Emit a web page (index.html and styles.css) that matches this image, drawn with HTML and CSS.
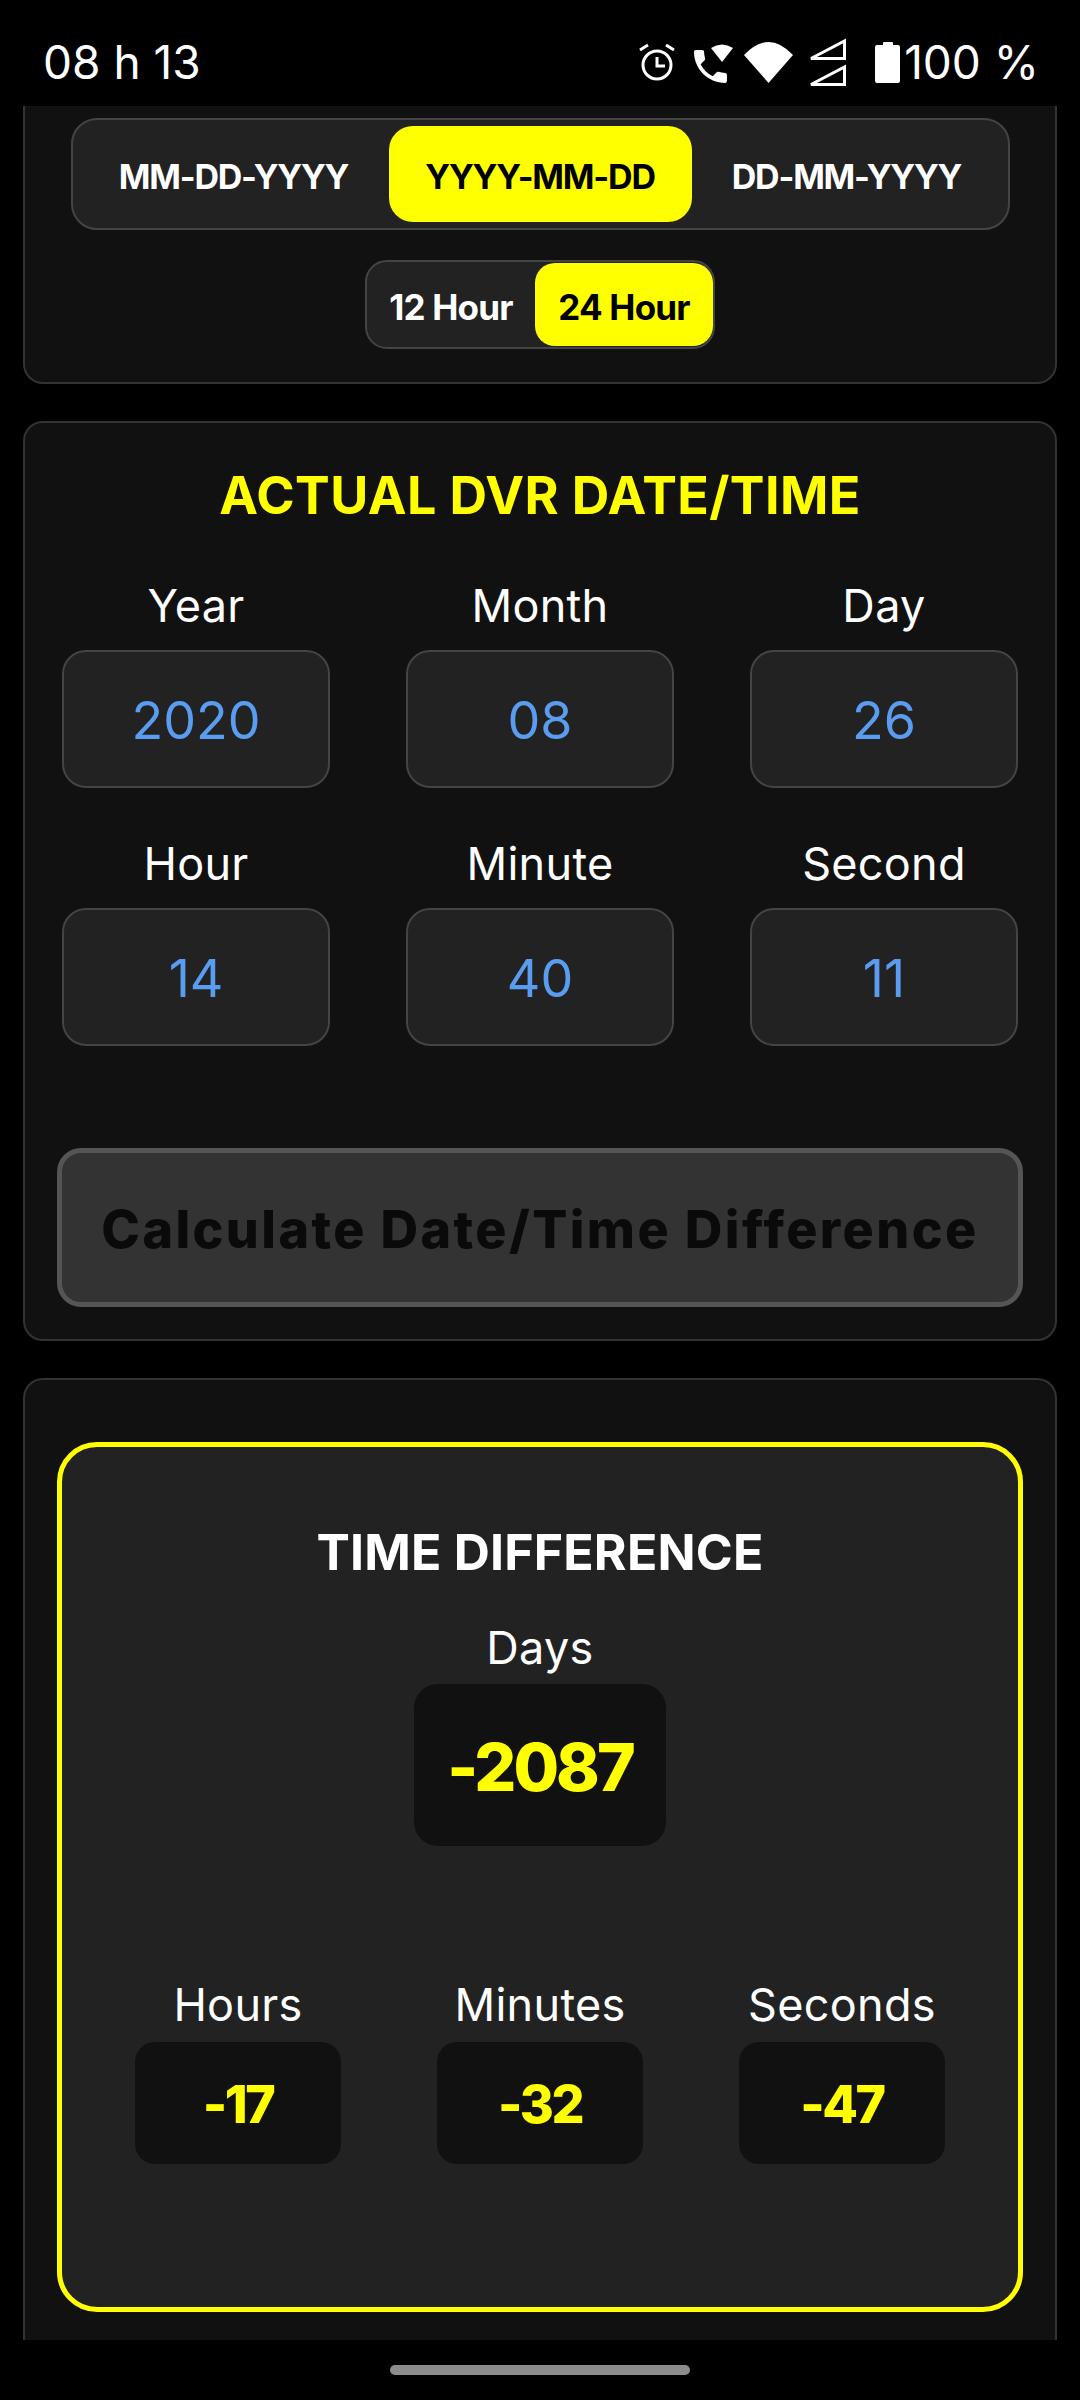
FILE: index.html
```html
<!DOCTYPE html>
<html lang="en">
<head>
  <meta charset="UTF-8">
  <title>DVR Time Calculator</title>
  <meta name="viewport" content="width=device-width, initial-scale=1.0">
  <link rel="stylesheet" href="styles.css">
</head>
<body>

<div class="phone">
  <div class="status-bar">
    <span class="clock">08 h 13</span>
    <div class="status-right">
      <svg class="status-icons" width="262" height="50" viewBox="0 0 262 50" fill="#fff">
        <!-- alarm -->
        <g fill="none" stroke="#fff" stroke-width="3">
          <circle cx="19" cy="27" r="14"/>
          <path d="M19 19v9h8"/>
          <path d="M2 12l8-5M36 12l-8-5"/>
        </g>
        <!-- wifi call -->
        <path transform="translate(50.500 6.500) scale(1.83)" d="M6.62 10.79c1.44 2.83 3.76 5.14 6.59 6.59l2.2-2.2c.27-.27.67-.36 1.02-.24 1.12.37 2.33.57 3.57.57.55 0 1 .45 1 1V20c0 .55-.45 1-1 1-9.39 0-17-7.61-17-17 0-.55.45-1 1-1h3.5c.55 0 1 .45 1 1 0 1.25.2 2.45.57 3.57.11.35.03.74-.25 1.02l-2.2 2.2z"/>
        <path d="M73 10Q84 3 95 10L84 24z"/>
        <!-- wifi -->
        <path d="M106 17Q130.500 -9 155 17L130.500 45z"/>
        <!-- signal, two sims -->
        <g fill="none" stroke="#fff" stroke-width="3">
          <path d="M173 20.500L206.500 3V20.500z"/>
          <path d="M173 46.500L206.500 29V46.500z"/>
        </g>
        <!-- battery -->
        <path d="M245 7V5a1 1 0 0 1 1-1h8a1 1 0 0 1 1 1v2h5a2 2 0 0 1 2 2v34a2 2 0 0 1-2 2h-21a2 2 0 0 1-2-2V9a2 2 0 0 1 2-2z"/>
      </svg>
      <span class="clock">100 %</span>
    </div>
  </div>

  <div class="scroll">
    <section class="card card-top">
      <div class="seg seg-date">
        <button>MM-DD-YYYY</button>
        <button class="active">YYYY-MM-DD</button>
        <button>DD-MM-YYYY</button>
      </div>
      <div class="seg seg-hour">
        <button>12 Hour</button>
        <button class="active">24 Hour</button>
      </div>
    </section>

    <section class="card card-dvr">
      <h2 class="dvr-title">ACTUAL DVR DATE/TIME</h2>
      <div class="fields">
        <div class="field"><label>Year</label><div class="input">2020</div></div>
        <div class="field"><label>Month</label><div class="input">08</div></div>
        <div class="field"><label>Day</label><div class="input">26</div></div>
        <div class="field"><label>Hour</label><div class="input">14</div></div>
        <div class="field"><label>Minute</label><div class="input">40</div></div>
        <div class="field"><label>Second</label><div class="input">11</div></div>
      </div>
      <button class="calc-btn">Calculate Date/Time Difference</button>
    </section>

    <section class="card card-result">
      <div class="result-box">
        <h2 class="result-title">TIME DIFFERENCE</h2>
        <div class="unit unit-days">
          <label>Days</label>
          <div class="value value-big">-2087</div>
        </div>
        <div class="units">
          <div class="unit"><label>Hours</label><div class="value">-17</div></div>
          <div class="unit"><label>Minutes</label><div class="value">-32</div></div>
          <div class="unit"><label>Seconds</label><div class="value">-47</div></div>
        </div>
      </div>
    </section>
  </div>

  <div class="nav-bar"><div class="nav-pill"></div></div>
</div>

</body>
</html>
```

FILE: styles.css
```css
* {
  margin: 0;
  padding: 0;
  box-sizing: border-box;
}

html, body {
  height: 100%;
  background: #000;
  color: #fff;
  font-family: 'Inter', 'Liberation Sans', sans-serif;
  overflow: hidden;
}

.phone {
  height: 2400px;
  display: flex;
  flex-direction: column;
}

/* status bar */
.status-bar {
  height: 106px;
  flex: none;
  display: flex;
  align-items: center;
  justify-content: space-between;
  padding: 18px 41px 0 43px;
}

.clock {
  font-size: 46px;
  line-height: 50px;
  white-space: nowrap;
}

.status-right {
  display: flex;
  align-items: center;
  gap: 4px;
}

.status-icons {
  display: block;
  margin-top: 2px;
}

.scroll {
  flex: 1;
  overflow: hidden;
  padding: 0 23px;
}

.nav-bar {
  height: 60px;
  flex: none;
  display: flex;
  align-items: center;
  justify-content: center;
}

.nav-pill {
  width: 300px;
  height: 10px;
  border-radius: 5px;
  background: #8c8c8c;
}

/* cards */
.card {
  background: #111;
  border: 2px solid #333;
  border-radius: 20px;
  margin-bottom: 37px;
}

.card-top {
  border-top: none;
  border-top-left-radius: 0;
  border-top-right-radius: 0;
  padding: 12px 47px 33px;
  display: flex;
  flex-direction: column;
  align-items: center;
}

.seg {
  display: flex;
  background: #222;
  border: 2px solid #444;
}

.seg button {
  border: none;
  background: none;
  color: #fff;
  font-family: inherit;
  font-weight: 700;
  white-space: nowrap;
  padding-top: 5px;
}

.seg button.active {
  background: #ff0;
  color: #000;
}

.seg-date {
  width: 939px;
  height: 112px;
  padding: 6px;
  border-radius: 26px;
}

.seg-date button {
  flex: 1;
  font-size: 34px;
  letter-spacing: -1.2px;
  border-radius: 24px;
}

.seg-date button.active {
  flex: 0 0 303px;
}

.seg-hour {
  width: 350px;
  height: 89px;
  margin-top: 30px;
  padding: 1px 0;
  border-radius: 22px;
}

.seg-hour button {
  font-size: 35px;
  letter-spacing: -0.8px;
  border-radius: 20px;
}

.seg-hour button:first-child {
  width: 168px;
}

.seg-hour button.active {
  width: 178px;
}

.card-dvr {
  padding: 43px 32px 32px;
}

.dvr-title {
  font-size: 52px;
  line-height: 60px;
  font-weight: 700;
  text-align: center;
  color: #ff0;
  letter-spacing: 0.4px;
}

.fields {
  display: grid;
  grid-template-columns: repeat(3, 268px);
  justify-content: space-between;
  row-gap: 51px;
  margin: 55px 5px 102px;
}

.field label, .unit label {
  display: block;
  font-size: 45px;
  line-height: 50px;
  text-align: center;
  letter-spacing: 0.3px;
}

.input {
  height: 138px;
  margin-top: 19px;
  padding-top: 2px;
  background: #222;
  border: 2px solid #444;
  border-radius: 24px;
  color: #5a9cf0;
  font-size: 52px;
  display: flex;
  align-items: center;
  justify-content: center;
}

.calc-btn {
  display: block;
  width: 100%;
  height: 159px;
  padding-top: 3px;
  background: #333;
  border: 5px solid #555;
  border-radius: 24px;
  color: #0a0a0a;
  font-family: inherit;
  font-size: 52px;
  font-weight: 800;
  letter-spacing: 2.4px;
  white-space: nowrap;
}

.card-result {
  border-bottom: none;
  border-bottom-left-radius: 0;
  border-bottom-right-radius: 0;
  padding: 62px 32px 28px;
  margin-bottom: 0;
}

.result-box {
  background: #222;
  border: 5px solid #ff0;
  border-radius: 40px;
  padding: 75px 0 143px;
}

.result-title {
  font-size: 50px;
  line-height: 60px;
  font-weight: 700;
  letter-spacing: 0.2px;
  text-align: center;
}

.unit-days {
  width: 252px;
  margin: 41px auto 0;
}

.value {
  margin-top: 12px;
  height: 122px;
  padding-top: 3px;
  background: #111;
  border-radius: 20px;
  color: #ff0;
  font-size: 52px;
  font-weight: 800;
  letter-spacing: -2.5px;
  display: flex;
  align-items: center;
  justify-content: center;
}

.value-big {
  height: 162px;
  margin-top: 11px;
  border-radius: 24px;
  font-size: 66px;
  letter-spacing: -3px;
}

.units {
  display: grid;
  grid-template-columns: repeat(3, 206px);
  justify-content: center;
  column-gap: 96px;
  margin-top: 134px;
}
```
